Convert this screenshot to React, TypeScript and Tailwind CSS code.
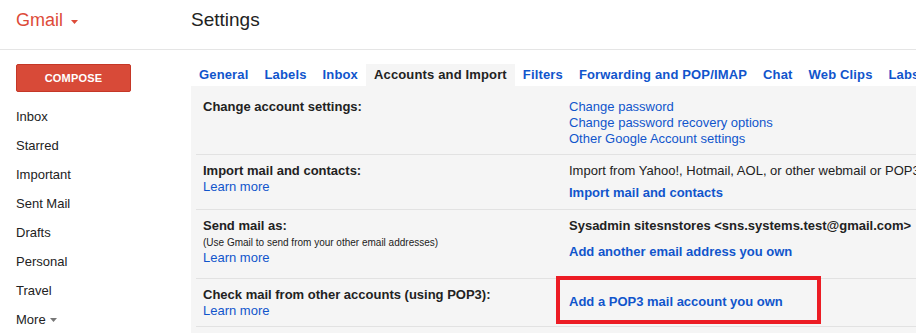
const navItems = ['Inbox', 'Starred', 'Important', 'Sent Mail', 'Drafts', 'Personal', 'Travel'];

const tabs = [
  'General',
  'Labels',
  'Inbox',
  'Accounts and Import',
  'Filters',
  'Forwarding and POP/IMAP',
  'Chat',
  'Web Clips',
  'Labs',
  'Offline',
  'Themes',
];

export default function App() {
  const activeTab = 'Accounts and Import';

  return (
    <div className="w-[916px] h-[333px] overflow-hidden bg-white font-['Liberation_Sans',Arial,sans-serif] text-[13px] text-[#222]">
      <header className="flex h-[50px] border-b border-[#e5e5e5]">
        <div className="w-[191px] shrink-0 pl-4 pt-[9px] flex items-start">
          <span className="text-[18px] leading-[22px] text-[#dd4b39]">Gmail</span>
          <svg className="ml-[8px] mt-[11px]" width="7" height="4" viewBox="0 0 7 4">
            <path d="M0 0h7L3.5 4z" fill="#dd4b39" />
          </svg>
        </div>
        <h1 className="pt-[8px] text-[19px] leading-[24px] font-normal">Settings</h1>
      </header>

      <div className="flex">
        <aside className="w-[191px] shrink-0">
          <button className="block ml-4 mt-[14px] w-[115px] h-[28px] rounded-[2px] bg-[#d84a38] border border-[#c53727] text-white text-[11px] font-bold tracking-[0.2px]">
            COMPOSE
          </button>
          <nav className="mt-[10px]">
            {navItems.map((item) => (
              <div key={item} className="h-[29px] flex items-center pl-4">
                {item}
              </div>
            ))}
            <div className="h-[29px] flex items-center pl-4">
              More
              <svg className="ml-[4px] mt-[1px]" width="7" height="4" viewBox="0 0 7 4">
                <path d="M0 0h7L3.5 4z" fill="#777" />
              </svg>
            </div>
          </nav>
        </aside>

        <main className="flex-1 min-w-0">
          <div className="mt-[14px] flex h-[22px] whitespace-nowrap tracking-[0.15px]">
            {tabs.map((tab) => (
              <div
                key={tab}
                className={
                  tab === activeTab
                    ? 'px-2 leading-[22px] font-bold bg-[#f5f5f5] text-[#222]'
                    : 'px-2 leading-[22px] font-bold text-[#15c]'
                }
              >
                {tab}
              </div>
            ))}
          </div>

          <div className="bg-[#f5f5f5] h-[400px]">
            <div className="ml-[5px]">
              {/* change account settings */}
              <div className="flex h-[69px] border-b border-[#e2e2e2] leading-4">
                <div className="w-[366px] shrink-0 pl-[7px] pt-[13px] font-bold">Change account settings:</div>
                <div className="pl-[7px] pt-[13px] text-[#15c] whitespace-nowrap">
                  <div>Change password</div>
                  <div>Change password recovery options</div>
                  <div>Other Google Account settings</div>
                </div>
              </div>

              {/* import */}
              <div className="flex h-[55px] border-b border-[#e2e2e2] leading-4">
                <div className="w-[366px] shrink-0 pl-[7px] pt-[8px]">
                  <div className="font-bold">Import mail and contacts:</div>
                  <div className="text-[#15c]">Learn more</div>
                </div>
                <div className="pl-[7px] pt-[8px] whitespace-nowrap">
                  <div>Import from Yahoo!, Hotmail, AOL, or other webmail or POP3 accounts.</div>
                  <div className="mt-[6px] font-bold text-[#15c]">Import mail and contacts</div>
                </div>
              </div>

              {/* send mail as */}
              <div className="flex h-[69px] border-b border-[#e2e2e2] leading-4">
                <div className="w-[366px] shrink-0 pl-[7px] pt-[8px]">
                  <div className="font-bold">Send mail as:</div>
                  <div className="mt-[2px] text-[10px] leading-[14px]">
                    (Use Gmail to send from your other email addresses)
                  </div>
                  <div className="text-[#15c]">Learn more</div>
                </div>
                <div className="pl-[7px] pt-[8px] whitespace-nowrap">
                  <div className="font-bold">Sysadmin sitesnstores &lt;sns.systems.test@gmail.com&gt;</div>
                  <div className="mt-[10px] font-bold text-[#15c]">Add another email address you own</div>
                </div>
              </div>

              {/* check mail */}
              <div className="flex h-[48px] border-b border-[#e2e2e2] leading-4">
                <div className="w-[366px] shrink-0 pl-[7px] pt-[8px]">
                  <div className="font-bold">Check mail from other accounts (using POP3):</div>
                  <div className="text-[#15c]">Learn more</div>
                </div>
                <div className="relative pl-[7px] pt-[15px] whitespace-nowrap">
                  <div className="font-bold text-[#15c]">Add a POP3 mail account you own</div>
                  <div className="absolute left-[-6px] top-[-3px] w-[265px] h-[48px] border-[4px] border-[#ec1c24]" />
                </div>
              </div>
            </div>
          </div>
        </main>
      </div>
    </div>
  );
}
